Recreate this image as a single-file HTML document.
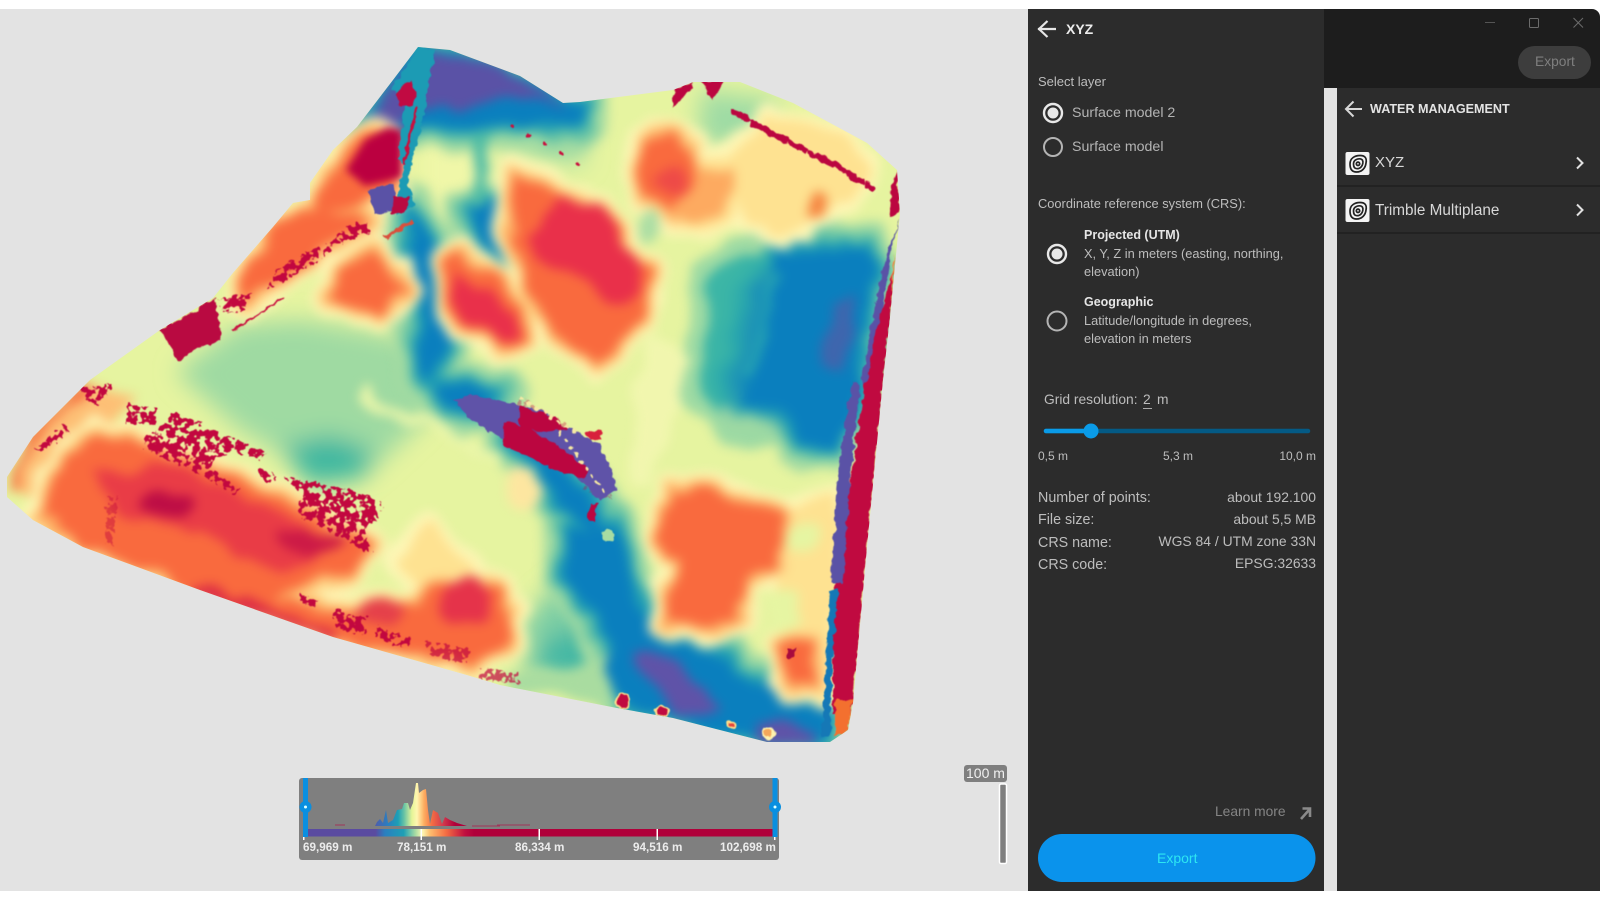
<!DOCTYPE html>
<html><head><meta charset="utf-8"><style>
html,body{margin:0;padding:0;background:#fff}
#r{position:relative;width:1600px;height:900px;overflow:hidden;background:#fff;font-family:"Liberation Sans",sans-serif}
.a{position:absolute}
.t{position:absolute;white-space:nowrap;line-height:20px;height:20px;font-size:14px;color:#bdbdbd}
.e{text-align:right}
svg{position:absolute;left:0;top:0}
</style></head><body><div id="r">
<div class="a" style="left:0;top:9px;width:1028px;height:882px;background:#e3e3e3"></div>
<svg width="1600" height="900" viewBox="0 0 1600 900" style="left:0;top:0">
<defs>
<clipPath id="f"><path d="M418 47L450 50L520 76L563 103L580 102L673 90L693 82L740 82L793 103L867 143L897 170L900 213L890 317L883 380L867 547L853 703L848 730L830 742L767 742L673 718L617 708L500 685L467 675L333 637L200 590L83 547L33 520L7 497L7 477L33 437L90 380L160 330L213 298L233 273L273 227L293 203L310 200L310 183L333 150L357 127L393 80Z"/></clipPath>
<filter id="h" filterUnits="userSpaceOnUse" x="0" y="0" width="1100" height="900" color-interpolation-filters="sRGB"><feTurbulence type="fractalNoise" baseFrequency=".025" numOctaves="2" seed="4" result="n"/><feDisplacementMap in="SourceGraphic" in2="n" scale="26" xChannelSelector="R" yChannelSelector="G" result="m"/><feGaussianBlur in="m" stdDeviation="5.500"/></filter>
<filter id="c" filterUnits="userSpaceOnUse" x="0" y="0" width="1100" height="900"><feGaussianBlur stdDeviation="12"/></filter>
<filter id="b4" filterUnits="userSpaceOnUse" x="0" y="0" width="1100" height="900"><feGaussianBlur stdDeviation="4"/></filter>
<filter id="o" filterUnits="userSpaceOnUse" x="0" y="0" width="1100" height="900" color-interpolation-filters="sRGB"><feTurbulence type="fractalNoise" baseFrequency=".12" numOctaves="2" seed="7" result="n"/><feDisplacementMap in="SourceGraphic" in2="n" scale="7" xChannelSelector="R" yChannelSelector="G" result="m"/><feGaussianBlur in="m" stdDeviation=".6"/></filter>
<filter id="s" filterUnits="userSpaceOnUse" x="0" y="0" width="1100" height="900" color-interpolation-filters="sRGB"><feTurbulence type="fractalNoise" baseFrequency=".16" numOctaves="2" seed="11" result="n"/><feColorMatrix in="n" type="matrix" values="0 0 0 0 0 0 0 0 0 0 0 0 0 0 0 0 0 0 16 -6.800" result="k"/><feDisplacementMap in="SourceGraphic" in2="n" scale="10" xChannelSelector="R" yChannelSelector="G" result="m"/><feComposite in="m" in2="k" operator="in" result="q"/><feGaussianBlur in="q" stdDeviation=".5"/></filter>
<g id="C">
<path d="M357 127L393 80L418 47L520 76L563 103L585 103L578 120L540 128L500 122L470 126L440 124L400 128Z"/>
<path d="M405 205L430 240L445 290L450 330L435 375L425 380L420 330L412 270Z"/>
<path d="M470 205L495 205L510 240L515 262L505 265L480 240Z"/>
<path d="M777 247L867 247L877 273L853 420L833 447L800 447L790 413L745 405L755 373L770 300Z"/>
<path d="M565 530L612 522L625 570L640 610L660 640L715 650L735 675L790 695L828 712L828 742L767 742L673 718L625 705L610 680L610 647L600 613L567 580Z"/>
<path d="M435 385L470 385L500 395L480 410L445 410Z"/>
<path d="M510 440L555 465L590 490L600 530L580 525L555 490L530 465Z"/>
</g>
<g id="W">
<path d="M510 172L545 185L600 210L630 260L650 270L642 320L610 355L590 365L570 340L540 310L530 285L515 240Z"/>
<path d="M447 262L460 255L490 280L520 305L525 340L500 348L470 330L450 310Z"/>
<path d="M642 140L672 135L692 148L690 180L672 215L645 200L640 170Z"/>
<path d="M340 272L375 248L395 270L400 295L380 315L332 300Z"/>
<path d="M318 192L345 150L380 130L395 190L340 210L310 215Z"/>
<path d="M240 278L273 232L300 212L358 215L368 225L320 248L282 280L243 303Z"/>
<path d="M40 515L55 470L95 432L140 447L250 482L372 548L350 572L290 590L272 600L355 610L420 605L430 580L500 590L510 610L510 640L470 668L333 637L200 590L83 547Z"/>
<path d="M670 490L720 490L785 515L780 570L745 580L735 620L715 630L662 620L665 590L680 560L660 540Z"/>
<path d="M782 640L812 640L815 680L785 682Z"/>
</g>
<g id="P">
<path d="M692 165L735 165L730 215L672 220Z"/>
<path d="M770 120L840 138L865 165L830 205L790 228L750 220L735 165Z"/>
<path d="M790 515L835 500L830 640L820 690L790 640Z"/>
<path d="M405 560L430 530L440 550L470 570L430 585Z"/>
</g>
</defs>
<g clip-path="url(#f)">
<rect x="0" y="0" width="1000" height="800" fill="#e6f4a0"/>
<g filter="url(#c)">
<path d="M175 372L240 325L300 320L360 330L410 340L450 385L420 425L372 470L310 470L240 430Z" fill="#9fdaa2"/>
<path d="M280 447L330 435L372 450L365 478L310 485Z" fill="#3fb8a0"/>
<path d="M40 480L100 425L160 450L280 500L300 560L200 585L90 545Z" fill="#fde08e"/>
<path d="M615 540L640 550L650 640L560 650L515 640L540 600Z" fill="#7fcfa4"/>
<path d="M550 635L605 625L620 690L520 670Z" fill="#45b8a4"/>
<path d="M700 90L780 100L760 140L700 150Z" fill="#9edba4"/>
<path d="M420 130L480 130L495 200L450 240L420 200Z" fill="#f0f7a8"/>
<path d="M500 125L580 125L585 165L500 150Z" fill="#9edba4"/>
</g>
<g filter="url(#h)" stroke-linejoin="round">
<path d="M700 395L712 272L790 243L782 425L735 428Z" fill="#9ddaa3" stroke="#9ddaa3" stroke-width="40"/>
<path d="M700 395L712 272L790 243L782 425L735 428Z" fill="#3cb6a6"/>
<g fill="#a4dba2" stroke="#a4dba2" stroke-width="50"><use href="#C"/></g>
<g fill="#66c4a5" stroke="#66c4a5" stroke-width="30"><use href="#C"/></g>
<g fill="#1f9db4" stroke="#1f9db4" stroke-width="14"><use href="#C"/></g>
<path d="M700 395L712 272L780 245L745 410Z" fill="#3cb6a6"/>
<path filter="url(#c)" d="M728 402L752 285L790 250L800 420Z" fill="#0f85bc"/>
<g fill="#0a7fbe"><use href="#C"/></g>
<path d="M780 272L750 375" stroke="#27a5b2" stroke-width="9" fill="none"/>
<path d="M480 130L478 205" stroke="#4fbca5" stroke-width="14" fill="none"/>
<path d="M360 128L390 88L430 52L520 78L563 105L530 102L500 100L470 106L440 108L405 120Z" fill="#5a52a6"/>
<path d="M635 655L680 660L712 690L722 712L680 716L650 690Z" fill="#5f53a8"/>
<path d="M760 725L780 715L812 735L812 745L760 745Z" fill="#5f53a8"/>
<path d="M834 300L855 295L860 340L838 375L822 360Z" fill="#3e66ae"/>
<path d="M360 395L500 458" stroke="#ebf6aa" stroke-width="9" fill="none"/>
<path d="M640 392L660 340L685 360L660 440L640 480Z" fill="#f1f6ae" stroke="#f1f6ae" stroke-width="14"/>
<path d="M7 490L30 440L95 385L135 400L65 465L45 515Z" fill="#fdbf75"/>
<path d="M10 490L33 440L90 385" stroke="#f57040" stroke-width="8" fill="none"/>
<g fill="#fdf6b6" stroke="#fdf6b6" stroke-width="32"><use href="#W"/><use href="#P"/></g>
<ellipse cx="520" cy="487" rx="20" ry="17" fill="#fde6a0"/>
<g fill="#fee291" stroke="#fee291" stroke-width="12"><use href="#P"/></g>
<g fill="#fed78a" stroke="#fed78a" stroke-width="20"><use href="#W"/></g>
<g fill="#fdaa60" stroke="#fdaa60" stroke-width="10"><use href="#W"/></g>
<path d="M692 168L733 168L728 212L675 218Z" fill="#fdaa60"/>
<path d="M812 192L830 200L822 215L808 218Z" fill="#f5833f"/>
<g fill="#f96a3e"><use href="#W"/></g>
<path d="M527 240L557 197L597 203L613 240L640 267L640 293L627 307L600 297L567 273L537 257Z" fill="#e9304a"/>
<path d="M460 272L490 293L515 315L518 335L498 340L470 322L456 300Z" fill="#e9304a"/>
<path d="M90 475L170 465L250 500L300 520L340 545L280 570L230 555L200 530L120 515Z" fill="#e93c46"/>
<ellipse cx="165" cy="500" rx="28" ry="14" fill="#bd0d45"/>
<ellipse cx="310" cy="540" rx="32" ry="12" fill="#cc1a46"/>
<ellipse cx="465" cy="600" rx="24" ry="22" fill="#e5334a"/>
<ellipse cx="380" cy="615" rx="24" ry="12" fill="#e5404a"/>
<ellipse cx="670" cy="185" rx="12" ry="14" fill="#ee4a47"/>
<ellipse cx="645" cy="227" rx="12" ry="14" fill="#abdda4"/>
<ellipse cx="802" cy="537" rx="14" ry="12" fill="#e6f5a2"/>
<ellipse cx="785" cy="610" rx="17" ry="18" fill="#e6f5a2"/>
<path d="M505 680L610 655L610 700L520 692Z" fill="#a9dca0"/>
<path d="M190 590L340 635" stroke="#dc2c44" stroke-width="12" fill="none"/>
</g>
<path d="M346 170L365 140L388 127L403 130L402 178L365 186Z" fill="#bb0640" filter="url(#b4)"/>
<g filter="url(#s)" fill="#c2073f">
<path d="M170 412L227 435L267 452L257 460L233 450L207 467L240 490L233 493L187 467L143 450L147 437L167 423Z"/>
<path d="M127 403L157 410L155 425L127 423Z"/>
<path d="M283 477L350 490L382 503L377 520L363 527L372 553L357 547L320 527L297 513L303 493Z"/>
<path d="M260 468L277 477L272 484L260 478Z"/>
<path d="M33 450L63 423L70 432L43 452Z"/>
<path d="M80 387L113 385L100 405L85 403Z"/>
<path d="M373 227L353 223L333 240L307 253L277 270L267 290L283 283L320 260L343 243L370 233Z"/>
<path d="M217 300L253 293L240 313L225 312Z"/>
<path d="M333 610L367 618L365 635L335 628Z"/>
<path d="M377 627L413 640L408 648L377 638Z"/>
<path d="M300 593L317 600L315 608L302 603Z"/>
<path d="M108 495L118 497L113 545L105 543Z" opacity=".45"/>
<path d="M425 640L470 650L465 665L430 655Z" opacity=".7"/>
<path d="M478 668L520 672L520 684L480 680Z" opacity=".7"/>
<path d="M520 398L575 430L605 470L612 500L590 492L560 452L510 420Z" opacity=".35"/>
</g>
<g filter="url(#o)">
<path d="M160 330L215 298L222 340L195 350L178 362L170 345Z" fill="#b90a41"/>
<path d="M418 47L435 50L425 110L410 170L398 160L405 100L392 90Z" fill="#1c9bb4"/>
<path d="M402 85L412 80L416 92L412 107L399 105L396 95Z" fill="#c10a42"/>
<path d="M418 106L409 140L404 165L400 180L396 216L415 205L408 185Z" fill="#1c9bb4"/>
<path d="M417 106L404 165" stroke="#c8103f" stroke-width="3" fill="none"/>
<path d="M368 190L395 183L398 210L375 215Z" fill="#5a52a6"/>
<path d="M395 198L410 195L405 212L390 215Z" fill="#b90a41"/>
<path d="M385 237L412 222" stroke="#d9503d" stroke-width="4" fill="none"/>
<path d="M233 330L283 298" stroke="#c8103f" stroke-width="2" fill="none"/>
<path d="M733 112L775 135L835 165L872 188" stroke="#bb0640" stroke-width="6" fill="none" stroke-dasharray="9 4 4 6 22 3 12 5" stroke-linecap="round"/>
<path d="M676 100L692 85L678 90Z" fill="#bb0640" stroke="#bb0640" stroke-width="6"/>
<path d="M703 82L722 82L713 98Z" fill="#bb0640" stroke="#bb0640" stroke-width="2"/>
<path d="M512 125L583 167" stroke="#c8103f" stroke-width="4" stroke-dasharray="1 18" stroke-linecap="round" fill="none"/>
<path d="M897 170L900 212L889 218L891 190Z" fill="#bb0640"/>
<path d="M899 218L890 255L884 300L870 395L862 380L876 300L888 250Z" fill="#5a52a6"/>
<path d="M896 252L885 310L872 380L883 380L890 317Z" fill="#f5803e"/>
<path d="M893 273L890 317L883 380L867 547L853 703L850 715L833 715L833 607L852 470L863 395L875 335Z" fill="#c00a40"/>
<path d="M835 700L852 700L848 730L835 738Z" fill="#f3702f"/>
<path d="M860 384L851 470L843 583L831 583L838 470L852 382Z" fill="#5a52a6"/>
<path d="M838 590L833 650L830 735L822 735L827 640L830 590Z" fill="#1578b6"/>
<path d="M455 400L470 394L505 402L540 410L572 430L600 445L615 480L617 490L600 500L590 490L570 470L560 460L535 450L505 440L470 420Z" fill="#5f53a8"/>
<path d="M505 420L530 428L570 455L590 470L585 478L555 470L525 455L503 445Z" fill="#bb0640"/>
<path d="M520 405L560 420L568 430L540 432L520 425Z" fill="#bb0640"/>
<path d="M585 432L600 430L602 438L590 440Z" fill="#d8203c"/>
<path d="M590 505L597 503L594 520L588 519Z" fill="#bb0640"/>
<circle cx="608" cy="535" r="6" fill="#a8dca2"/>
<path d="M520 398L575 432M560 432L606 495" stroke="#f6e9a4" stroke-width="3" stroke-dasharray="2 7" fill="none" stroke-linecap="round"/>
<circle cx="623" cy="702" r="7" fill="#c00a40" stroke="#fde08e" stroke-width="2"/>
<circle cx="662" cy="712" r="6" fill="#c00a40" stroke="#fde08e" stroke-width="2"/>
<circle cx="732" cy="725" r="4" fill="#e4453c" stroke="#fee08b" stroke-width="2"/>
<circle cx="768" cy="733" r="6" fill="#f4a75a" stroke="#fff3ae" stroke-width="2"/>
<path d="M788 650L795 648L793 657L788 660Z" fill="#a80b3e"/>
</g>
</g>
<rect x="299" y="778" width="480" height="82" rx="3" fill="#7f7f7f"/>
<defs>
<linearGradient id="g1" gradientUnits="userSpaceOnUse" x1="370" x2="470" y1="0" y2="0"><stop offset="0" stop-color="#5e4fa2"/><stop offset=".18" stop-color="#2a7fc0"/><stop offset=".28" stop-color="#1d9fb5"/><stop offset=".34" stop-color="#66c2a5"/><stop offset=".42" stop-color="#e6f598"/><stop offset=".47" stop-color="#fff6b0"/><stop offset=".54" stop-color="#fdae61"/><stop offset=".62" stop-color="#f46d43"/><stop offset=".72" stop-color="#d53e4f"/><stop offset=".85" stop-color="#b0003a"/></linearGradient>
<linearGradient id="g2" gradientUnits="userSpaceOnUse" x1="305" x2="775" y1="0" y2="0"><stop offset="0" stop-color="#5a4ba0"/><stop offset=".15" stop-color="#5a4ba0"/><stop offset=".17" stop-color="#2a7fc0"/><stop offset=".21" stop-color="#1e9fb5"/><stop offset=".235" stop-color="#a8dca2"/><stop offset=".25" stop-color="#fdf7b4"/><stop offset=".265" stop-color="#fdc070"/><stop offset=".3" stop-color="#f46d43"/><stop offset=".34" stop-color="#c01040"/><stop offset=".36" stop-color="#b0003a"/><stop offset="1" stop-color="#b0003a"/></linearGradient>
</defs>
<path d="M375 826L377 822L380 819L383 823L386 810L388 823L393 820L397 810L402 809L404 803L408 803L410 810L413 803L416 783L418 783L419 793L423 790L426 789L428 810L430 824L433 810L438 813L442 824L445 817L450 820L457 823L467 826Z" fill="url(#g1)"/>
<path d="M335 825H345M472 826H500M497 825H530" stroke="#a0355a" stroke-width="1" fill="none"/>
<rect x="305" y="829" width="469" height="7.500" fill="url(#g2)"/>
<g fill="#fff"><rect x="303" y="835" width="1.500" height="5"/><rect x="420.500" y="829" width="1.500" height="11"/><rect x="538.500" y="829" width="1.500" height="11"/><rect x="656.500" y="829" width="1.500" height="11"/><rect x="774" y="835" width="1.500" height="5"/></g>
<rect x="303" y="778" width="5" height="59" fill="#0a8fe0"/><circle cx="305.500" cy="807" r="6" fill="#0a8fe0"/><circle cx="305.500" cy="807" r="1.500" fill="#dff"/>
<rect x="772.500" y="778" width="5" height="59" fill="#0a8fe0"/><circle cx="775" cy="807" r="6" fill="#0a8fe0"/><circle cx="775" cy="807" r="1.500" fill="#dff"/>
<rect x="964" y="765" width="43" height="17" rx="3" fill="#7f7f7f"/>
<rect x="999.500" y="784" width="7" height="79.500" rx="1.500" fill="#7f7f7f" stroke="#fff" stroke-width="1.500"/>
</svg>
<div class="t" style="left:303px;top:837.500px;font-size:11.700px;font-weight:bold;color:#ececec">69,969 m</div>
<div class="t" style="left:397px;top:837.500px;font-size:11.700px;font-weight:bold;color:#ececec">78,151 m</div>
<div class="t" style="left:515px;top:837.500px;font-size:11.700px;font-weight:bold;color:#ececec">86,334 m</div>
<div class="t" style="left:633px;top:837.500px;font-size:11.700px;font-weight:bold;color:#ececec">94,516 m</div>
<div class="t" style="left:720px;top:837.500px;font-size:11.700px;font-weight:bold;color:#ececec">102,698 m</div>
<div class="t" style="left:966px;top:763px;font-size:14px;color:#f0f0f0">100 m</div>

<div class="a" style="left:1028px;top:9px;width:296px;height:882px;background:#2c2c2c"></div>
<div class="a" style="left:1324px;top:9px;width:276px;height:79px;background:#1d1d1d;border-top-right-radius:8px"></div>
<div class="a" style="left:1324px;top:88px;width:13px;height:803px;background:#e3e3e3"></div>
<div class="a" style="left:1337px;top:88px;width:263px;height:803px;background:#2c2c2c"></div>
<div class="a" style="left:1518px;top:46px;width:73px;height:33px;border-radius:17px;background:#3d3d3d"></div>
<div class="t" style="left:1535px;top:52px;font-size:13.800px;color:#7f7f7f">Export</div>
<svg width="1600" height="900" viewBox="0 0 1600 900" fill="none">
<path d="M1038 29H1056M1047.500 21L1039 29L1047.500 37" stroke="#e6e6e6" stroke-width="2.200"/>
<path d="M1346 109H1362M1353.500 101.500L1346 109L1353.500 116.500" stroke="#d8d8d8" stroke-width="2"/>
<circle cx="1053" cy="113" r="9" stroke="#e8e8e8" stroke-width="2.400"/><circle cx="1053" cy="113" r="5.500" fill="#e8e8e8"/>
<circle cx="1053" cy="147" r="9" stroke="#b4b4b4" stroke-width="2"/>
<circle cx="1057" cy="254" r="9" stroke="#e8e8e8" stroke-width="2.400"/><circle cx="1057" cy="254" r="5.500" fill="#e8e8e8"/>
<circle cx="1057" cy="321" r="9.500" stroke="#b4b4b4" stroke-width="2"/>
<path d="M1046 431H1308" stroke="#045a85" stroke-width="4.500" stroke-linecap="round"/>
<path d="M1046 431H1091" stroke="#0a9be8" stroke-width="4.500" stroke-linecap="round"/>
<circle cx="1091" cy="431" r="7.500" fill="#0a9be8"/>
<path d="M1143 408.500H1152" stroke="#aaa" stroke-width="1"/>
<path d="M1301 819L1309 810M1302.500 808.500H1310V817" stroke="#8a8a8a" stroke-width="2.600"/>
<rect x="1038" y="834" width="277.500" height="48" rx="24" fill="#0a93ec"/>
<path d="M1485 22.500H1495" stroke="#555" stroke-width="1"/>
<rect x="1529.500" y="18.500" width="9" height="9" rx="1" stroke="#6c6c6c" stroke-width="1"/>
<path d="M1573.500 18L1583 27.500M1583 18L1573.500 27.500" stroke="#6c6c6c" stroke-width="1"/>
<path d="M1337 186H1600M1337 233H1600" stroke="#1e1e1e" stroke-width="1.500"/>
<path d="M1577 157.500L1582.500 163L1577 168.500M1577 204.500L1582.500 210L1577 215.500" stroke="#e0e0e0" stroke-width="2"/>
<rect x="1345.500" y="152" width="24" height="23" rx="2" fill="#f4f4f4"/>
<rect x="1345.500" y="199" width="24" height="23" rx="2" fill="#f4f4f4"/>
<g stroke="#222" fill="none" stroke-width="1.700">
<path d="M1350 164C1350 158 1355 155.500 1360 155.500C1365 155.500 1367 158 1366 163C1365.500 168 1362 172 1356.500 172C1352 172 1350 169 1350 164Z"/>
<path d="M1353.500 164C1353.500 160.500 1356.500 158.800 1359.500 158.800C1362.500 158.800 1363.300 161 1362.800 163.500C1362.300 166.500 1360 168.700 1357 168.700C1354.700 168.700 1353.500 167 1353.500 164Z"/>
<circle cx="1358" cy="163.800" r="1.700"/>
<path d="M1350 211C1350 205 1355 202.500 1360 202.500C1365 202.500 1367 205 1366 210C1365.500 215 1362 219 1356.500 219C1352 219 1350 216 1350 211Z"/>
<path d="M1353.500 211C1353.500 207.500 1356.500 205.800 1359.500 205.800C1362.500 205.800 1363.300 208 1362.800 210.500C1362.300 213.500 1360 215.700 1357 215.700C1354.700 215.700 1353.500 214 1353.500 211Z"/>
<circle cx="1358" cy="210.800" r="1.700"/>
</g>
</svg>
<div class="t" style="left:1066px;top:19px;font-weight:bold;color:#ececec">XYZ</div>
<div class="t" style="left:1038px;top:72px;font-size:13px">Select layer</div>
<div class="t" style="left:1072px;top:103px;font-size:14.200px;color:#b4b4b4">Surface model 2</div>
<div class="t" style="left:1072px;top:137px;font-size:14.200px;color:#b4b4b4">Surface model</div>
<div class="t" style="left:1038px;top:194px;font-size:12.850px">Coordinate reference system (CRS):</div>
<div class="t" style="left:1084px;top:225px;font-size:12.500px;font-weight:bold;color:#e6e6e6">Projected (UTM)</div>
<div class="t" style="left:1084px;top:243.500px;font-size:12.800px">X, Y, Z in meters (easting, northing,</div>
<div class="t" style="left:1084px;top:262px;font-size:12.800px">elevation)</div>
<div class="t" style="left:1084px;top:292px;font-size:12.500px;font-weight:bold;color:#e6e6e6">Geographic</div>
<div class="t" style="left:1084px;top:311px;font-size:12.800px">Latitude/longitude in degrees,</div>
<div class="t" style="left:1084px;top:329px;font-size:12.800px">elevation in meters</div>
<div class="t" style="left:1044px;top:389.500px;font-size:13.800px">Grid resolution:</div>
<div class="t" style="left:1143px;top:389.500px;font-size:13.800px">2</div>
<div class="t" style="left:1157px;top:389.500px;font-size:13.800px">m</div>
<div class="t" style="left:1038px;top:446px;font-size:12px">0,5 m</div>
<div class="t" style="left:1163px;top:446px;font-size:12px">5,3 m</div>
<div class="t e" style="left:1216px;width:100px;top:446px;font-size:12px">10,0 m</div>
<div class="t" style="left:1038px;top:487.500px;font-size:14.300px">Number of points:</div>
<div class="t" style="left:1038px;top:510px;font-size:14.300px">File size:</div>
<div class="t" style="left:1038px;top:532.500px;font-size:14.300px">CRS name:</div>
<div class="t" style="left:1038px;top:554.500px;font-size:14.300px">CRS code:</div>
<div class="t e" style="left:1116px;width:200px;top:486.500px;font-size:13.900px">about 192.100</div>
<div class="t e" style="left:1116px;width:200px;top:508.500px;font-size:13.900px">about 5,5 MB</div>
<div class="t e" style="left:1116px;width:200px;top:531px;font-size:13.900px">WGS 84 / UTM zone 33N</div>
<div class="t e" style="left:1116px;width:200px;top:553px;font-size:13.900px">EPSG:32633</div>
<div class="t" style="left:1215px;top:802px;font-size:13.800px;color:#858585">Learn more</div>
<div class="t" style="left:1157px;top:848px;color:#2de6f2">Export</div>
<div class="t" style="left:1370px;top:99px;font-size:12.600px;font-weight:bold;color:#e4e4e4">WATER MANAGEMENT</div>
<div class="t" style="left:1375px;top:153px;font-size:15px;color:#d8d8d8">XYZ</div>
<div class="t" style="left:1375px;top:200.500px;font-size:15.300px;color:#d8d8d8">Trimble Multiplane</div>
</div></body></html>
